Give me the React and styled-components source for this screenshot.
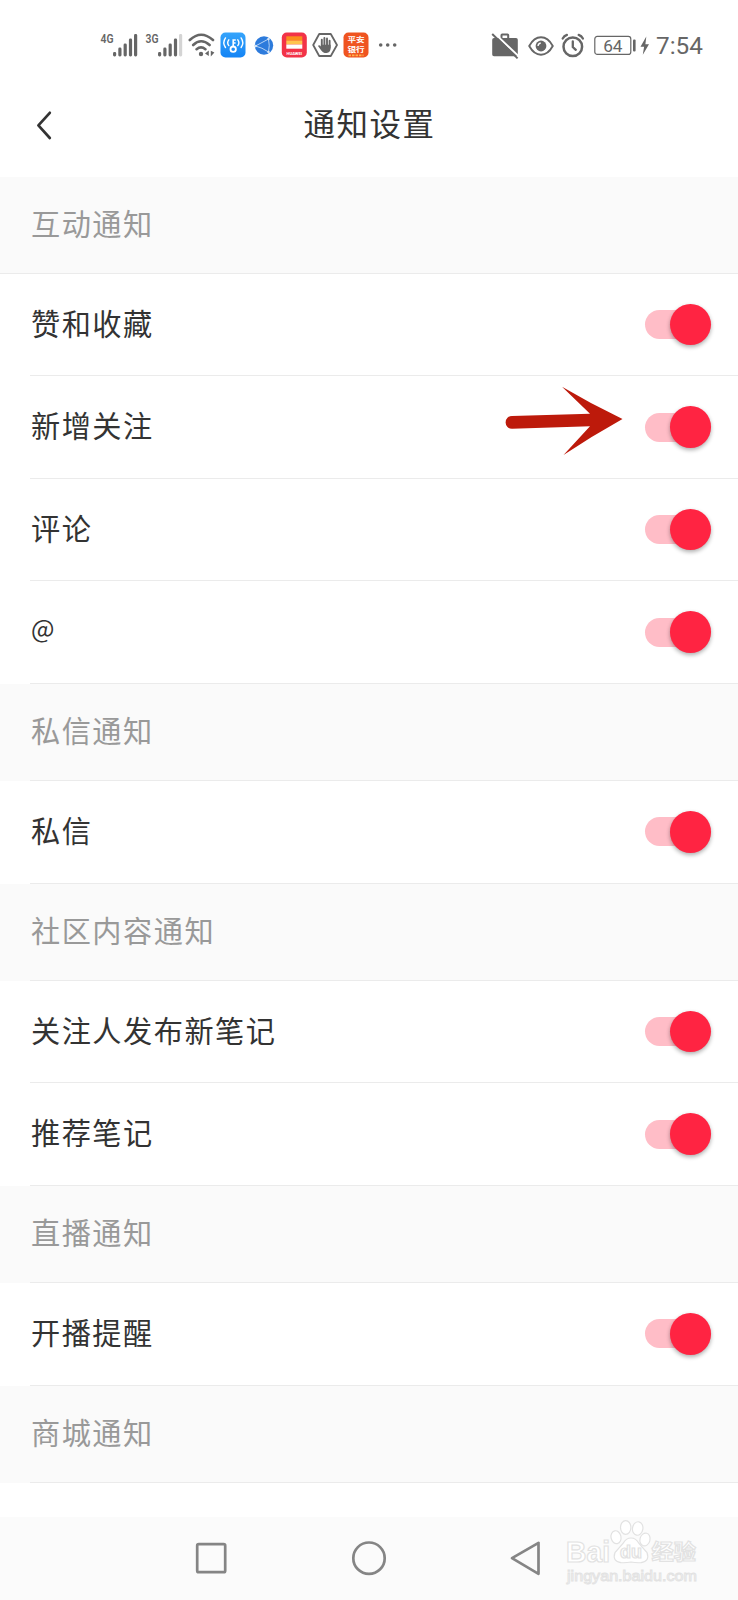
import React from 'react'
import styled, { createGlobalStyle, css } from 'styled-components'

const color = {
  white: '#ffffff',
  paper: '#fafafa',
  nav: '#fbfbfb',
  line: '#ebebeb',
  text: '#333333',
  muted: '#999999',
  status: '#666666',
  red: '#ff2442',
  track: '#ffbdc7',
  arrow: '#bd1a0b',
}

const GlobalStyle = createGlobalStyle`
  * {
    box-sizing: border-box;
  }
  body {
    margin: 0;
    background-color: ${color.white};
    font-family: 'Noto Sans CJK SC', sans-serif;
  }
`

const Screen = styled.main`
  position: relative;
  display: flex;
  flex-direction: column;
  width: 738px;
  height: 1600px;
  overflow: hidden;
  background-color: ${color.white};
`

const StatusBar = styled.header`
  display: flex;
  justify-content: space-between;
  align-items: center;
  height: 90px;
  padding: 0 35px 0 100px;
  flex: none;
`

const StatusGroup = styled.div`
  display: flex;
  align-items: center;
`

const StatusIcon = styled.svg`
  display: block;
  flex: none;
  margin-left: ${({ $gap }) => $gap || 0}px;
  font-family: Roboto, sans-serif;
`

const Clock = styled.span`
  margin-left: 7px;
  width: 47px;
  padding-top: 2px;
  font-family: Roboto, sans-serif;
  font-size: 24.3px;
  line-height: 30px;
  white-space: nowrap;
  color: ${color.status};
`

const TitleBar = styled.div`
  display: grid;
  grid-template-columns: 88px 1fr 88px;
  align-items: center;
  height: 87px;
  padding-bottom: 18px;
  flex: none;
`

const BackButton = styled.button`
  display: flex;
  width: 88px;
  padding: 0 0 0 35px;
  border: 0;
  background: none;
`

const Title = styled.h1`
  margin: 0;
  padding: 0 0 5px 1px;
  text-align: center;
  font-size: 31.5px;
  font-weight: 400;
  line-height: 44px;
  letter-spacing: 1.5px;
  color: ${color.text};
`

const rowBase = css`
  position: relative;
  display: flex;
  align-items: center;
  flex: none;
  padding: 0 27px 0 31px;
  font-size: 29.2px;
  line-height: 42px;
  letter-spacing: 1.5px;
  &::after {
    content: '';
    position: absolute;
    left: ${({ $fullLine }) => ($fullLine ? 0 : 30)}px;
    right: 0;
    bottom: 0;
    height: 1px;
    background-color: ${color.line};
  }
`

const SectionTitle = styled.h2`
  ${rowBase}
  height: ${({ $fullLine }) => ($fullLine ? 96.9 : 97.25)}px;
  margin: 0;
  padding-bottom: 7px;
  font-weight: 400;
  color: ${color.muted};
  background-color: ${color.paper};
`

const Row = styled.div`
  ${rowBase}
  justify-content: space-between;
  height: 102.5px;
  color: ${color.text};
`

const Label = styled.span`
  font-size: ${({ $symbol }) => ($symbol ? 24.8 : 29.2)}px;
  padding-bottom: ${({ $symbol }) => ($symbol ? 12 : 7)}px;
`

const SwitchBox = styled.span`
  display: flex;
  align-items: center;
  margin-bottom: 1px;
`

const Rail = styled.span`
  width: 46px;
  height: 29px;
  margin-right: -21.5px;
  border-radius: 15px;
  background-color: ${color.track};
`

const Thumb = styled.span`
  width: 41.5px;
  height: 41.5px;
  border-radius: 50%;
  background-color: ${color.red};
  box-shadow: 0 2px 4px rgba(0, 0, 0, 0.32);
`

const Arrow = styled.svg`
  position: absolute;
  left: 505px;
  top: 386px;
`

const Spacer = styled.div`
  flex: 1;
`

const NavBar = styled.nav`
  display: flex;
  align-items: center;
  gap: 122px;
  height: 83px;
  flex: none;
  padding: 0 0 2px 193px;
  background-color: ${color.nav};
`

const Watermark = styled.svg`
  position: absolute;
  left: 560px;
  top: 1516px;
`

const Switch = () => (
  <SwitchBox role="switch" aria-checked="true">
    <Rail />
    <Thumb />
  </SwitchBox>
)

const Signal = ({ label, weak, gap }) => (
  <StatusIcon $gap={gap} width="38" height="34" viewBox="0 -4 38 34" fill={color.status}>
    <text x="0.5" y="11.3" fontSize="13.6" fontWeight="600" textLength="13" lengthAdjust="spacingAndGlyphs">
      {label}
    </text>
    <rect x="13" y="20" width="3.2" height="4.5" rx="1.4" />
    <rect x="18.3" y="15.5" width="3.2" height="9" rx="1.4" />
    <rect x="23.6" y="11.5" width="3.2" height="13" rx="1.4" />
    <rect x="28.9" y="6.5" width="3.2" height="18" rx="1.4" />
    <rect x="34" y="2" width="3.2" height="22.5" rx="1.4" fill={weak ? '#d4d4d4' : color.status} />
  </StatusIcon>
)

const WifiIcon = () => (
  <StatusIcon $gap={4} width="28" height="26" fill="none" stroke={color.status} strokeWidth="2.6" strokeLinecap="round">
    <path d="M2.8 8Q14 -2.5 26 8M6.2 13Q14 5.5 22.6 13M9.6 17.2Q14 13.6 18.4 17.2" />
    <circle cx="14" cy="22" r="2.2" fill={color.status} stroke="none" />
    <path d="M21.8 18.4V24L18 21.6ZM23.8 18.8v5.6L27.4 20.6Z" fill={color.status} stroke="none" />
  </StatusIcon>
)

const KeyAppIcon = () => (
  <StatusIcon $gap={5} width="26" height="26" fill="none" stroke="#fff" strokeWidth="1.4" strokeLinecap="round">
    <defs>
      <linearGradient id="key" x2="0" y2="1">
        <stop stopColor="#35a4fb" />
        <stop offset="1" stopColor="#1484f5" />
      </linearGradient>
    </defs>
    <rect x="0.5" y="0.5" width="25" height="25" rx="5" fill="url(#key)" stroke="none" />
    <circle cx="13.2" cy="17.2" r="2.7" strokeWidth="1.8" />
    <path d="M13.2 14.4V8h2M13.2 11h1.8" strokeWidth="1.6" />
    <path d="M8.8 7.8q-2.2 2.9 0 5.8M5.5 5.9q-3.4 4.8 0 9.6M17.8 7.8q2.2 2.9 0 5.8M21.1 5.9q3.4 4.8 0 9.6" />
  </StatusIcon>
)

const GlobeAppIcon = () => (
  <StatusIcon $gap={8} width="20" height="20" fill="none" stroke="#c5dcf6" strokeWidth="0.9">
    <circle cx="10" cy="10.5" r="9.2" fill="#2d7bdc" stroke="none" />
    <path d="M1.5 11L14.5 4M1.5 11Q8 12.5 14.5 17M14.5 4Q16 10.5 14.5 17" />
    <circle cx="1.8" cy="11" r="0.9" fill="#fff" />
    <circle cx="14.5" cy="4" r="0.9" fill="#fff" />
    <circle cx="14.5" cy="17" r="0.9" fill="#fff" />
  </StatusIcon>
)

const HuaweiAppIcon = () => (
  <StatusIcon $gap={7} width="26" height="26">
    <rect x="0.8" y="0.5" width="25" height="25" rx="5" fill="#f23348" />
    <rect x="5.3" y="4.3" width="16" height="4.2" fill="#fb8d1c" />
    <rect x="5.3" y="8.5" width="16" height="4" fill="#ffc44f" />
    <rect x="5.3" y="12.5" width="16" height="4.2" fill="#fff" />
    <text x="13.3" y="22.6" fontSize="4.2" fontWeight="700" fill="#fff" textAnchor="middle">
      HUAWEI
    </text>
  </StatusIcon>
)

const HandIcon = () => (
  <StatusIcon $gap={5} width="26" height="26" fill="none" stroke={color.status}>
    <path d="M7.2 2h11.6L25 13l-6.200 11H7.200L1.200 13Z" strokeWidth="1.8" strokeLinejoin="round" />
    <path d="M9.8 7.8v8M12.4 6v9M15 6.4v8M17.6 8.8v7" strokeWidth="1.9" strokeLinecap="round" />
    <path d="M8.9 12.8h9.700v3.200q0 4.500-4 4.900h-2q-2.100-.5-3.300-2.400L6 14q.9-1.600 2.900.4Z" fill={color.status} stroke="none" />
  </StatusIcon>
)

const BankIcon = () => (
  <StatusIcon $gap={5} width="26" height="26">
    <rect x="0.5" y="0.5" width="25" height="25" rx="5" fill="#ef5420" />
    <g fill="#fff" fontFamily="Noto Sans CJK SC" fontWeight="700">
      <text x="4.4" y="10.4" fontSize="6.8" textLength="17.2" lengthAdjust="spacingAndGlyphs">
        平安
      </text>
      <text x="4.4" y="20" fontSize="6.8" textLength="17.2" lengthAdjust="spacingAndGlyphs">
        银行
      </text>
    </g>
    <path d="M5.5 23.4h15" stroke="#ffb14a" strokeWidth="1.8" strokeDasharray="2.5 1" />
  </StatusIcon>
)

const MoreIcon = () => (
  <StatusIcon $gap={8.5} width="20" height="6" fill={color.status}>
    <circle cx="2.7" cy="3" r="1.8" />
    <circle cx="9.7" cy="3" r="1.8" />
    <circle cx="16.7" cy="3" r="1.8" />
  </StatusIcon>
)

const BriefcaseOffIcon = () => (
  <StatusIcon width="28" height="30" fill={color.status}>
    <path
      d="M9.5 8V5.2Q9.5 3.5 11.2 3.5H16.5Q18.2 3.5 18.2 5.2V8H25Q26.8 8 26.8 9.8V24.5Q26.8 26.2 25 26.2H3Q1.2 26.2 1.2 24.5V9.8Q1.2 8 3 8ZM11.5 8H16.2V5.5H11.5Z"
      fillRule="evenodd"
    />
    <path d="M2.6 2.4L28 26.6" stroke="#fff" strokeWidth="2" />
    <path d="M1.2 4L26.6 28.4" stroke={color.status} strokeWidth="2" />
  </StatusIcon>
)

const EyeIcon = () => (
  <StatusIcon $gap={9} width="26" height="23" fill="none" stroke={color.status} strokeWidth="1.9">
    <path d="M1.2 12Q6 3.3 13 3.3T24.8 12Q20 20.7 13 20.7T1.2 12Z" strokeLinejoin="round" />
    <circle cx="13" cy="12" r="5.4" fill={color.status} stroke="none" />
    <path d="M10 12Q10.2 9.6 12.7 9" stroke="#fff" strokeWidth="1.3" />
  </StatusIcon>
)

const AlarmIcon = () => (
  <StatusIcon $gap={6.5} width="26" height="28" fill="none" stroke={color.status} strokeWidth="2.3" strokeLinecap="round">
    <circle cx="12.8" cy="15.7" r="9.3" strokeWidth="2.5" />
    <path d="M12.8 10.5V16l3 2.8M2.7 7.5Q4.1 4.9 6.9 3.9M22.9 7.5Q21.5 4.9 18.7 3.9" />
  </StatusIcon>
)

const BatteryIcon = () => (
  <StatusIcon $gap={7} width="56" height="22" fill={color.status}>
    <rect x="1.8" y="2.4" width="36" height="18" rx="2.5" fill="none" stroke={color.status} strokeWidth="1.2" />
    <text x="19.8" y="17.7" fontSize="17.2" textAnchor="middle">
      64
    </text>
    <rect x="40" y="5.5" width="2.6" height="12" rx="1" />
    <path d="M53.3 2.500L47.500 12.700h3.600L49.800 20.700L56 10.300h-3.600Z" />
  </StatusIcon>
)

const sections = [
  { title: '互动通知', rows: ['赞和收藏', '新增关注', '评论', '@'] },
  { title: '私信通知', rows: ['私信'] },
  { title: '社区内容通知', rows: ['关注人发布新笔记', '推荐笔记'] },
  { title: '直播通知', rows: ['开播提醒'] },
  { title: '商城通知', rows: [] },
]

const App = () => (
  <Screen>
    <GlobalStyle />
    <StatusBar>
      <StatusGroup>
        <Signal label="4G" />
        <Signal label="3G" weak gap={7} />
        <WifiIcon />
        <KeyAppIcon />
        <GlobeAppIcon />
        <HuaweiAppIcon />
        <HandIcon />
        <BankIcon />
        <MoreIcon />
      </StatusGroup>
      <StatusGroup>
        <BriefcaseOffIcon />
        <EyeIcon />
        <AlarmIcon />
        <BatteryIcon />
        <Clock>7:54</Clock>
      </StatusGroup>
    </StatusBar>
    <TitleBar>
      <BackButton aria-label="返回">
        <svg width="18" height="30" fill="none" stroke={color.text} strokeWidth="2.7" strokeLinecap="round" strokeLinejoin="round">
          <path d="M14.8 2.8L3.4 15.4l11.4 12.6" />
        </svg>
      </BackButton>
      <Title>通知设置</Title>
    </TitleBar>
    {sections.map((section, index) => (
      <React.Fragment key={section.title}>
        <SectionTitle $fullLine={index === 0}>{section.title}</SectionTitle>
        {section.rows.map((row) => (
          <Row key={row}>
            <Label $symbol={row === '@'}>{row}</Label>
            <Switch />
          </Row>
        ))}
      </React.Fragment>
    ))}
    <Spacer />
    <NavBar>
      <svg width="36" height="36" fill="none" stroke="#858585" strokeWidth="2.7">
        <rect x="4.2" y="4.2" width="28" height="28" rx="1.5" />
      </svg>
      <svg width="36" height="36" fill="none" stroke="#858585" strokeWidth="2.7">
        <circle cx="18" cy="18.2" r="15.7" />
      </svg>
      <svg width="36" height="36" fill="none" stroke="#858585" strokeWidth="2.7" strokeLinejoin="round">
        <path d="M29.5 2.8v31L3 18.2Z" />
      </svg>
    </NavBar>
    <Arrow width="120" height="72" fill={color.arrow}>
      <path d="M7 30L85 27.8L57 0.8Q86 18 117.5 33Q87 50 58.5 69L85 40.3L7 42.8A6.4 6.4 0 0 1 7 30Z" />
    </Arrow>
    <Watermark width="150" height="72" fill="#fff" stroke="#e2e2e2" strokeWidth="1.2" fontFamily="Liberation Sans" fontWeight="700">
      <text x="6" y="45.5" fontSize="30" textLength="44" lengthAdjust="spacingAndGlyphs">
        Bai
      </text>
      <ellipse cx="56" cy="21.2" rx="5" ry="6.5" transform="rotate(-12 56 21.2)" />
      <ellipse cx="65.7" cy="11.5" rx="5.2" ry="6.8" />
      <ellipse cx="77.7" cy="12.5" rx="5.2" ry="6.8" transform="rotate(10 77.7 12.5)" />
      <ellipse cx="85" cy="23.5" rx="5" ry="6.5" transform="rotate(15 85 23.5)" />
      <path d="M71 22Q76 22 79 27.500L87 36.500Q90 45.500 81 46.700Q76 47 71 46Q66 47 61 46.700Q52 45.500 55 36.500L63 27.500Q66 22 71 22Z" />
      <text x="71" y="42" fontSize="18" textAnchor="middle">
        du
      </text>
      <text x="91.5" y="43" fontSize="21" textLength="44.500" lengthAdjust="spacingAndGlyphs" fontFamily="Noto Sans CJK SC">
        经验
      </text>
      <text x="7" y="64.5" fontSize="14" fontWeight="400" strokeWidth="0.9" textLength="130" lengthAdjust="spacingAndGlyphs">
        jingyan.baidu.com
      </text>
    </Watermark>
  </Screen>
)

export default App
